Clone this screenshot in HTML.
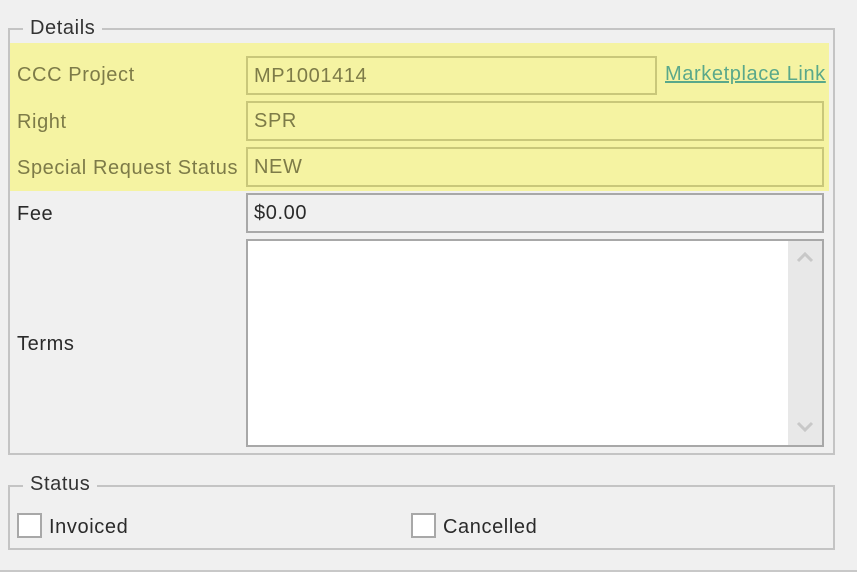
<!DOCTYPE html>
<html><head><style>
body{margin:0;width:857px;height:572px;background:#f0f0f0;position:relative;overflow:hidden;font-family:"Liberation Sans",sans-serif;font-size:20px;letter-spacing:0.6px;color:#2a2a2a}
.a{position:absolute}
.box{position:absolute;border:2px solid #c4c4c4}
.lg{position:absolute;background:#f0f0f0;padding:0 7px;color:#333;line-height:22px}
.f{position:absolute;border:2px solid #c9c77a;box-sizing:border-box;padding-left:6px;line-height:36px;color:#7d7b48}
.y{color:#7d7b48}
.cb{position:absolute;width:21px;height:21px;border:2px solid #a8a8a8;background:#fff}
</style></head><body>
<div class="a" style="left:0;top:570px;width:857px;height:2px;background:#c8c8c8"></div>
<div class="box" style="left:8px;top:28px;width:823px;height:423px"></div>
<div class="lg" style="left:23px;top:17px">Details</div>
<div class="a" style="left:10px;top:43px;width:819px;height:148px;background:#f5f3a2"></div>
<div class="a y" style="left:17px;top:64px">CCC Project</div>
<div class="a y" style="left:17px;top:111px">Right</div>
<div class="a y" style="left:17px;top:157px">Special Request Status</div>
<div class="a" style="left:17px;top:203px">Fee</div>
<div class="a" style="left:17px;top:333px">Terms</div>
<div class="f" style="left:246px;top:56px;width:411px;height:39px">MP1001414</div>
<div class="a" style="left:665px;top:63px;color:#5aa88a;text-decoration:underline">Marketplace Link</div>
<div class="f" style="left:246px;top:101px;width:578px;height:40px">SPR</div>
<div class="f" style="left:246px;top:147px;width:578px;height:40px">NEW</div>
<div class="f" style="left:246px;top:193px;width:578px;height:40px;border-color:#a8a8a8;color:#2a2a2a;background:#f0f0f0">$0.00</div>
<div class="a" style="left:246px;top:239px;width:574px;height:204px;border:2px solid #a8a8a8;background:#fff"></div>
<div class="a" style="left:788px;top:241px;width:34px;height:204px;background:#e8e8e8"></div>
<svg class="a" style="left:796px;top:250px" width="18" height="14"><path d="M2 11 L9 4 L16 11" fill="none" stroke="#c8c8c8" stroke-width="3"/></svg>
<svg class="a" style="left:796px;top:420px" width="18" height="14"><path d="M2 3 L9 10 L16 3" fill="none" stroke="#c8c8c8" stroke-width="3"/></svg>
<div class="box" style="left:8px;top:485px;width:823px;height:61px"></div>
<div class="lg" style="left:23px;top:473px">Status</div>
<div class="cb" style="left:17px;top:513px"></div>
<div class="a" style="left:49px;top:516px">Invoiced</div>
<div class="cb" style="left:411px;top:513px"></div>
<div class="a" style="left:443px;top:516px">Cancelled</div>
</body></html>
